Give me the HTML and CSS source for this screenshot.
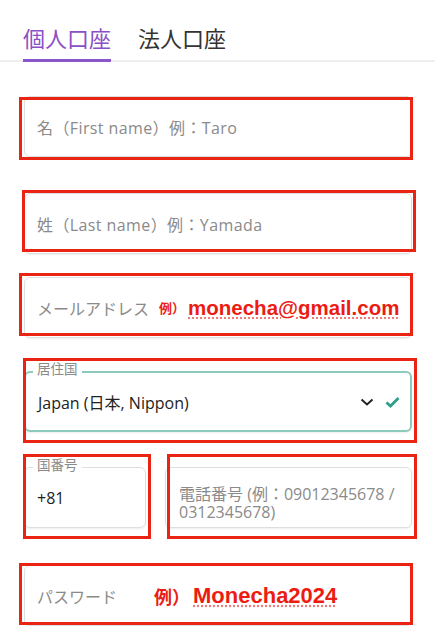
FILE: index.html
```html
<!doctype html>
<html>
  <head>
    <meta name="viewport" content="width=device-width, user-scalable=no">
    <title>口座開設</title>
    <link rel="stylesheet" href="styles.css">
  </head>
  <body>
    <div class="tabs">
      <div class="tab active">個人口座</div>
      <div class="tab">法人口座</div>
    </div>

    <div class="form">

      <div class="field first mark m1">
        <span class="ph">名（First name）例：Taro</span>
      </div>

      <div class="field last mark m2">
        <span class="ph">姓（Last name）例：Yamada</span>
      </div>

      <div class="field email mark m3">
        <span class="ph">メールアドレス</span>
        <span class="ex-small">例）</span><span class="ex">monecha@gmail.com</span>
      </div>

      <div class="field country mark m4">
        <span class="legend">居住国</span>
        <span class="value">Japan (日本, Nippon)</span>
        <svg class="chev" width="14" height="8" viewBox="0 0 14 8">
          <path d="M1.5 1.5 L7 6.5 L12.5 1.5" fill="none" stroke="#222" stroke-width="2"/>
        </svg>
        <svg class="check" width="15" height="12" viewBox="0 0 15 12">
          <path d="M1.5 6.5 L5.5 10 L13.5 2" fill="none" stroke="#2f9e88" stroke-width="2.8"/>
        </svg>
      </div>

      <div class="row">
        <div class="field code mark m5">
          <span class="legend">国番号</span>
          <span class="value">+81</span>
        </div>
        <div class="field phone mark m6">
          <span class="ph">電話番号 (例：09012345678 / 0312345678)</span>
        </div>
      </div>

      <div class="field password mark m7">
        <span class="ph">パスワード</span>
        <span class="ex-mid">例）</span><span class="ex big">Monecha2024</span>
      </div>

    </div>
  </body>
</html>
```

FILE: styles.css
```css
body {
  margin: 0;
  background: #fff;
  font-family: "Open Sans", "Noto Sans CJK JP", sans-serif;
  color: #222;
}

/* tabs */
.tabs {
  display: flex;
  gap: 27px;
  height: 62px;
  padding-left: 23px;
  border-bottom: 2px solid #eeeeee;
  box-sizing: border-box;
}

.tab {
  display: flex;
  align-items: center;
  padding-top: 14px;
  margin-bottom: -2px;
  font-family: "Noto Sans CJK JP", sans-serif;
  font-size: 22px;
  color: #333;
  border-bottom: 3px solid transparent;
  box-sizing: border-box;
}

.tab.active {
  color: #8b4fc7;
  border-bottom-color: #8b55cc;
}

/* form */
.form {
  padding: 34px 23px 0 24px;
}

.field {
  position: relative;
  height: 61px;
  display: flex;
  align-items: center;
  padding: 0 12px;
  border: 1px solid #dedede;
  border-radius: 6px;
  box-shadow: 0 1px 2px rgba(0, 0, 0, 0.07);
  box-sizing: border-box;
}

.ph {
  font-size: 16px;
  letter-spacing: 0.4px;
  color: #8a8a8a;
  white-space: nowrap;
}

.value {
  font-size: 16px;
  color: #222;
}

.legend {
  position: absolute;
  top: -10px;
  left: 8px;
  padding: 0 4px;
  background: #fff;
  font-size: 13.5px;
  line-height: 15px;
  color: #8a8a8a;
}

.last { margin-top: 36px; }
.email { margin-top: 23px; }
.country {
  margin-top: 33px;
  border: 2px solid #8ccabb;
  padding-right: 10px;
}
.country .legend { left: 7px; top: -11px; }
.row {
  display: flex;
  gap: 19px;
  margin-top: 35px;
}
.code { width: 122px; flex: none; }
.phone {
  flex: 1;
  padding: 10px 10px 0 13px;
}
.phone .ph {
  white-space: normal;
  letter-spacing: 0;
  font-size: 16px;
  line-height: 18px;
}
.password { margin-top: 37px; }

.email .ph, .password .ph { letter-spacing: 0; }

.chev { margin-left: auto; }
.check { margin-left: 11px; }

/* red example text */
.ex-small, .ex-mid, .ex {
  font-family: "Liberation Sans", "Noto Sans CJK JP", sans-serif;
  font-weight: bold;
  color: #ec1c12;
  white-space: nowrap;
}
.ex-small {
  margin-left: 10px;
  font-size: 13px;
}
.ex-mid {
  margin-left: 37px;
  font-size: 18px;
}
.ex {
  margin-left: 3px;
  font-size: 20.5px;
  text-decoration: underline dotted #f07a7a;
  text-underline-offset: 3px;
}
.ex.big { font-size: 22px; }

/* red annotation frames */
.mark::after {
  content: "";
  position: absolute;
  border: 3px solid #ea2312;
  box-sizing: border-box;
  pointer-events: none;
}
.m1::after { top: 0; left: -6px; right: -2px; bottom: -4px; }
.m2::after { top: -4px; left: -3px; right: -5px; bottom: 1px; }
.m3::after { top: -5px; left: -6px; right: -2px; bottom: 1px; }
.m4::after { top: -15px; left: -3px; right: -7px; bottom: -13px; }
.m5::after { top: -14px; left: -2px; right: -6px; bottom: -12px; }
.m6::after { top: -14px; left: 1px; right: -6px; bottom: -12px; }
.m7::after { top: -3px; left: -6px; right: -2px; bottom: 0; }
```
